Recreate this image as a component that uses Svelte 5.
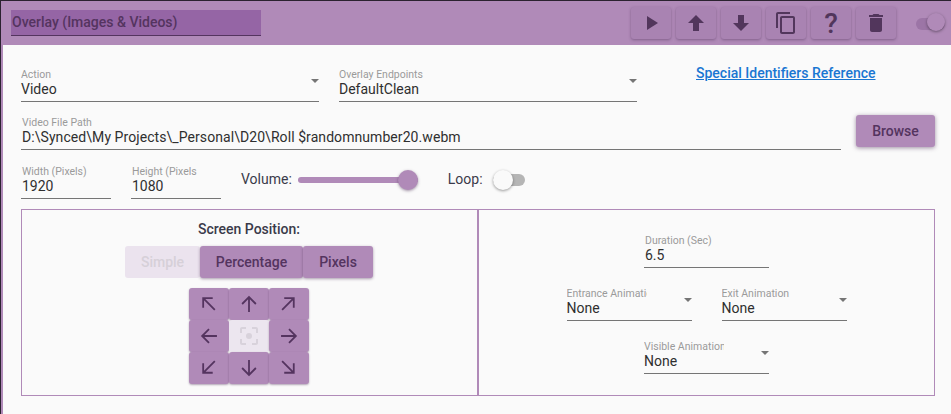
<script>
    const arrows = [
        { name: 'nw', d: 'M14 14 3 3M3 12V3h9' },
        { name: 'n', d: 'M8.500 16V2M2 8.500l6.500-6.500 6.500 6.500' },
        { name: 'ne', d: 'M2 14 13 3M4 3h9v9' },
        { name: 'w', d: 'M16 8.500H2M8.500 2 2 8.500 8.500 15' },
        { name: 'center' },
        { name: 'e', d: 'M1 8.500h14M8.500 2 15 8.500 8.500 15' },
        { name: 'sw', d: 'M14 2 3 13M3 4v9h9' },
        { name: 's', d: 'M8.500 1v14M2 8.500 8.500 15 15 8.500' },
        { name: 'se', d: 'M2 2l11 11M13 4v9H4' }
    ]
</script>

{#snippet field(label, value, cls, select)}
    <div class="field {cls}" class:text={!select}>
        <div class="label"><span>{label}</span></div>
        <div class="value">{value}</div>
        {#if select}<i class="caret"></i>{/if}
    </div>
{/snippet}

<div class="page">
    <header class="head">
        <div class="title">Overlay (Images &amp; Videos)</div>
        <div class="tools">
            <button class="tool" aria-label="Play">
                <svg width="24" height="24" viewBox="0 0 24 24"><path d="M8 5v14l11-7z"/></svg>
            </button>
            <button class="tool" aria-label="Move up">
                <svg width="24" height="24" viewBox="0 0 24 24"><path d="M12 4 4 12h5v8h6v-8h5z"/></svg>
            </button>
            <button class="tool" aria-label="Move down">
                <svg width="24" height="24" viewBox="0 0 24 24"><path d="M12 20l8-8h-5V4H9v8H4z"/></svg>
            </button>
            <button class="tool" aria-label="Copy">
                <svg width="24" height="24" viewBox="0 0 24 24"><path d="M16 1H4c-1.100 0-2 .9-2 2v14h2V3h12V1zm3 4H8c-1.100 0-2 .9-2 2v14c0 1.100.9 2 2 2h11c1.100 0 2-.9 2-2V7c0-1.100-.9-2-2-2zm0 16H8V7h11v14z"/></svg>
            </button>
            <button class="tool help">?</button>
            <button class="tool" aria-label="Delete">
                <svg width="24" height="24" viewBox="0 0 24 24"><path d="M6 19c0 1.100.9 2 2 2h8c1.100 0 2-.9 2-2V7H6v12zM19 4h-3.500l-1-1h-5l-1 1H5v2h14V4z"/></svg>
            </button>
            <div class="toggle on"><span></span></div>
        </div>
    </header>

    <main class="body">
        <div class="row first">
            {@render field('Action', 'Video', 'wide', true)}
            {@render field('Overlay Endpoints', 'DefaultClean', 'wide', true)}
            <a class="ref" href="#top">Special Identifiers Reference</a>
        </div>

        <div class="row path">
            {@render field('Video File Path', 'D:\\Synced\\My Projects\\_Personal\\D20\\Roll $randomnumber20.webm', 'grow', false)}
            <button class="browse">Browse</button>
        </div>

        <div class="row size">
            {@render field('Width (Pixels)', '1920', 'small', false)}
            {@render field('Height (Pixels', '1080', 'small', false)}
            <span class="inline vol">Volume:</span>
            <div class="slider"><span class="thumb"></span></div>
            <span class="inline loop">Loop:</span>
            <div class="toggle off"><span></span></div>
        </div>

        <section class="box">
            <div class="pos">
                <h3>Screen Position:</h3>
                <div class="modes">
                    <button class="mode simple">Simple</button>
                    <button class="mode pct">Percentage</button>
                    <button class="mode px">Pixels</button>
                </div>
                <div class="grid">
                    {#each arrows as a}
                        {#if a.d}
                            <button class="cell" aria-label={a.name}>
                                <svg width="18" height="18" viewBox="0 0 17 17"><path d={a.d}/></svg>
                            </button>
                        {:else}
                            <button class="cell mid" aria-label={a.name}>
                                <svg width="24" height="24" viewBox="0 0 24 24"><path d="M5 15H3v4c0 1.100.9 2 2 2h4v-2H5v-4zM5 5h4V3H5c-1.100 0-2 .9-2 2v4h2V5zm14-2h-4v2h4v4h2V5c0-1.100-.9-2-2-2zm0 16h-4v2h4c1.100 0 2-.9 2-2v-4h-2v4z"/><circle cx="12" cy="12" r="3"/></svg>
                            </button>
                        {/if}
                    {/each}
                </div>
            </div>
            <div class="timing">
                {@render field('Duration (Sec)', '6.5', 'anim', false)}
                <div class="pair">
                    {@render field('Entrance Animation', 'None', 'anim clip', true)}
                    {@render field('Exit Animation', 'None', 'anim', true)}
                </div>
                {@render field('Visible Animation', 'None', 'anim clip', true)}
            </div>
        </section>
    </main>
</div>

<style>
    :global(body) {
        margin: 0;
        background: #fafafa;
    }
    .page {
        box-sizing: border-box;
        width: 951px;
        height: 414px;
        overflow: hidden;
        border-top: 1px solid #2b2230;
        border-left: 1px solid #2b2230;
        font-family: Roboto, "Liberation Sans", sans-serif;
        color: #333;
    }
    .head {
        box-sizing: border-box;
        height: 44px;
        background: #b08ab8;
        display: flex;
        align-items: flex-start;
        justify-content: space-between;
        padding: 6px 6px 0 10px;
    }
    .title {
        box-sizing: border-box;
        width: 250px;
        height: 26px;
        margin-top: 3px;
        padding: 0 1px;
        background: #9565a5;
        border-bottom: 1px solid #54345f;
        color: #54345f;
        font-size: 14px;
        font-weight: 500;
        line-height: 24px;
    }
    .tools {
        display: flex;
        gap: 5px;
    }
    button {
        font-family: inherit;
        border: 0;
        padding: 0;
        margin: 0;
    }
    .tool {
        width: 40px;
        height: 32px;
        border-radius: 3px;
        background: #a983b2;
        box-shadow: 0 1px 3px rgba(70, 40, 80, 0.45);
        display: flex;
        align-items: center;
        justify-content: center;
    }
    .tool svg {
        fill: #52365c;
    }
    .help {
        color: #52365c;
        font-size: 28px;
        font-weight: 500;
    }
    .toggle {
        position: relative;
        width: 32px;
        height: 12px;
        border-radius: 6px;
    }
    .toggle span {
        position: absolute;
        top: -4px;
        width: 20px;
        height: 20px;
        border-radius: 50%;
        box-shadow: 0 1px 3px rgba(0, 0, 0, 0.4);
    }
    .toggle.on {
        margin: 11px 0 0 15px;
        width: 29px;
        background: #9c75a6;
    }
    .toggle.on span {
        right: 0;
        top: -5px;
        width: 18px;
        height: 18px;
        background: #b08ab8;
    }
    .toggle.off {
        background: #b5b5b5;
        margin: 8px 0 0 10px;
    }
    .toggle.off span {
        left: 0;
        background: #fafafa;
    }
    .body {
        height: 369px;
        padding: 24px 0 0 18px;
        border-left: 2px solid #b08ab8;
    }
    .row {
        display: flex;
        align-items: flex-start;
    }
    .path {
        margin-top: 15px;
    }
    .size {
        margin-top: 16px;
    }
    .field {
        box-sizing: border-box;
        position: relative;
        height: 33px;
        border-bottom: 1px solid #757575;
    }
    .field.text .label,
    .field.text .value {
        padding-left: 1px;
    }
    .label {
        height: 12px;
        overflow: hidden;
        white-space: nowrap;
        font-size: 10.5px;
        line-height: 12px;
        color: #9a9a9a;
    }
    .value {
        margin-top: -2px;
        font-size: 14px;
        line-height: 20px;
        color: #2f2f2f;
    }
    .grow .value {
        letter-spacing: 0.07px;
    }
    .caret {
        position: absolute;
        right: 0;
        top: 10px;
        border: 4px solid transparent;
        border-top: 4px solid #757575;
        border-bottom: 0;
    }
    .wide {
        width: 298px;
        margin-right: 20px;
    }
    .grow {
        width: 820px;
    }
    .small {
        width: 90px;
        margin-right: 20px;
    }
    .ref {
        margin: -6px 0 0 39px;
        font-size: 14px;
        font-weight: 500;
        line-height: 20px;
        color: #1976d2;
    }
    .browse {
        width: 79px;
        height: 32px;
        margin: -2px 0 0 15px;
        border-radius: 3px;
        background: #b08ab8;
        box-shadow: 0 1px 4px rgba(70, 40, 80, 0.5);
        color: #54345f;
        font-size: 14px;
        font-weight: 500;
    }
    .inline {
        font-size: 14px;
        line-height: 20px;
        margin-top: 3px;
        color: #3a3a4a;
    }
    .slider {
        position: relative;
        width: 120px;
        height: 6px;
        margin: 11px 0 0 6px;
        border-radius: 3px;
        background: #b08ab8;
    }
    .thumb {
        position: absolute;
        right: 0;
        top: -7px;
        width: 20px;
        height: 20px;
        border-radius: 50%;
        background: #b08ab8;
        box-shadow: 0 1px 3px rgba(70, 40, 80, 0.5);
    }
    .loop {
        margin-left: 30px;
    }
    .box {
        box-sizing: border-box;
        display: flex;
        width: 914px;
        height: 187px;
        margin-top: 10px;
        border: 1px solid #b08ab8;
    }
    .pos {
        box-sizing: border-box;
        width: 457px;
        padding-right: 1px;
        border-right: 2px solid #b08ab8;
        display: flex;
        flex-direction: column;
        align-items: center;
    }
    h3 {
        margin: 10px 0 0;
        font-size: 14px;
        font-weight: 500;
        line-height: 18px;
        color: #3a3a4a;
    }
    .modes {
        display: flex;
        height: 32px;
        margin-top: 8px;
    }
    .mode {
        border-radius: 3px;
        font-size: 14px;
        font-weight: 500;
        background: #b08ab8;
        color: #54345f;
        box-shadow: 0 1px 3px rgba(70, 40, 80, 0.45);
    }
    .simple {
        width: 75px;
        background: #ebe3ee;
        color: #d6d0d8;
        box-shadow: none;
    }
    .pct {
        width: 103px;
    }
    .px {
        width: 70px;
    }
    .grid {
        display: grid;
        grid-template-columns: repeat(3, 40px);
        grid-auto-rows: 32px;
        margin-top: 10px;
    }
    .cell {
        display: flex;
        align-items: center;
        justify-content: center;
        border-radius: 3px;
        background: #b08ab8;
        box-shadow: 0 1px 2px rgba(70, 40, 80, 0.4);
    }
    .cell svg {
        fill: none;
        stroke: #54345f;
        stroke-width: 1.700;
    }
    .cell.mid {
        background: #ece6ef;
        box-shadow: none;
    }
    .cell.mid svg {
        fill: #d8d2db;
        stroke: none;
    }
    .timing {
        flex: 1;
        display: flex;
        flex-direction: column;
        align-items: center;
        padding: 25px 0 0;
        gap: 20px;
    }
    .anim {
        width: 125px;
    }
    .pair {
        display: flex;
        gap: 30px;
    }
    .clip .label span {
        display: block;
        width: 80px;
        overflow: hidden;
    }
</style>
